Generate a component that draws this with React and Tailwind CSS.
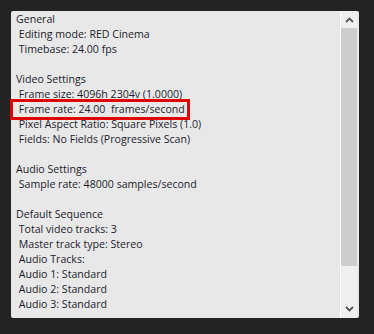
import React from 'react';

const lines = [
  "General",
  " Editing mode: RED Cinema",
  " Timebase: 24.00 fps",
  "",
  "Video Settings",
  " Frame size: 4096h 2304v (1.0000)",
  " Frame rate: 24.00  frames/second",
  " Pixel Aspect Ratio: Square Pixels (1.0)",
  " Fields: No Fields (Progressive Scan)",
  "",
  "Audio Settings",
  " Sample rate: 48000 samples/second",
  "",
  "Default Sequence",
  " Total video tracks: 3",
  " Master track type: Stereo",
  " Audio Tracks:",
  " Audio 1: Standard",
  " Audio 2: Standard",
  " Audio 3: Standard",
];

export default function App() {
  return (
    <div className="w-[374px] h-[334px] bg-[#232323] pt-[11px] pl-[11px] relative">
      <div className="w-[348px] h-[307px] bg-[#e8e8e8] rounded-[2px] flex overflow-hidden">
        <div
          className="flex-1 pl-[5px] pt-[1px] text-[10.6px] leading-[15px] text-[#1c1c2c] whitespace-pre overflow-hidden"
          style={{ fontFamily: '"Open Sans", "Noto Sans", sans-serif' }}
        >
          {lines.map((l, i) => (
            <div key={i} className="h-[15px]">{l}</div>
          ))}
        </div>
        <div className="w-[1px] bg-white" />
        <div className="w-[16px] bg-[#efefef] flex flex-col items-center">
          <div className="h-[17px] flex items-center justify-center pt-[1px]">
            <svg width="9" height="6" viewBox="0 0 9 6">
              <path d="M1 5 L4.5 1.5 L8 5" fill="none" stroke="#555" strokeWidth="1.8" />
            </svg>
          </div>
          <div className="w-full h-[238px] bg-[#cdcdcd]" />
          <div className="flex-1 flex items-end justify-center pb-[6px]">
            <svg width="9" height="6" viewBox="0 0 9 6">
              <path d="M1 1 L4.5 4.5 L8 1" fill="none" stroke="#555" strokeWidth="1.8" />
            </svg>
          </div>
        </div>
        <div className="w-[2px]" />
      </div>
      <div className="absolute left-[10px] top-[99px] w-[180px] h-[21px] border-[3px] border-[#e00000]" />
    </div>
  );
}
